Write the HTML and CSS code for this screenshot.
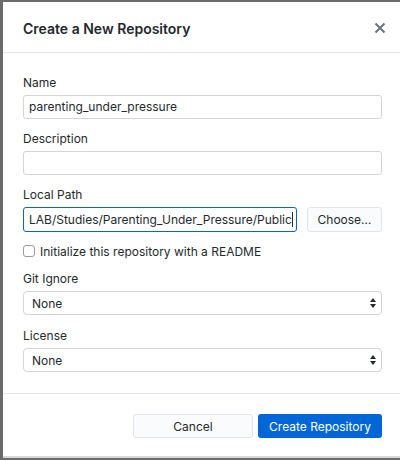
FILE: index.html
```html
<!DOCTYPE html>
<html>
<head>
<meta charset="utf-8">
<link rel="stylesheet" href="styles.css">
</head>
<body>
<div class="dialog">
  <header class="header">
    <h1 class="title">Create a New Repository</h1>
    <svg class="close" width="12" height="12" viewBox="0 0 12 12"><path d="M1.5 1.5 L10.5 10.5 M10.5 1.5 L1.5 10.5" stroke="#6a737d" stroke-width="2" stroke-linecap="butt"/></svg>
  </header>
  <div class="body">
    <div class="group">
      <label class="label">Name</label>
      <div class="input">parenting_under_pressure</div>
    </div>
    <div class="group">
      <label class="label">Description</label>
      <div class="input"></div>
    </div>
    <div class="group">
      <label class="label">Local Path</label>
      <div class="path-row">
        <div class="input focus"><span class="caret">LAB/Studies/Parenting_Under_Pressure/Public</span></div>
        <div class="btn choose">Choose…</div>
      </div>
    </div>
    <div class="check-row">
      <span class="checkbox"></span>
      <span class="check-label">Initialize this repository with a README</span>
    </div>
    <div class="group">
      <label class="label">Git Ignore</label>
      <div class="select"><span>None</span>
        <svg width="8" height="12" viewBox="0 0 8 12"><path d="M4 1 L7 5 L1 5 Z M4 11 L7 7 L1 7 Z" fill="#24292e"/></svg>
      </div>
    </div>
    <div class="group last">
      <label class="label">License</label>
      <div class="select"><span>None</span>
        <svg width="8" height="12" viewBox="0 0 8 12"><path d="M4 1 L7 5 L1 5 Z M4 11 L7 7 L1 7 Z" fill="#24292e"/></svg>
      </div>
    </div>
  </div>
  <footer class="footer">
    <div class="btn cancel">Cancel</div>
    <div class="btn primary">Create Repository</div>
  </footer>
</div>
</body>
</html>
```
FILE: styles.css
```css
* { box-sizing: border-box; }
html, body { margin: 0; padding: 0; }
body {
  width: 400px;
  height: 460px;
  overflow: hidden;
  background: #6b6b6b;
  font-family: Inter, "Liberation Sans", Arial, sans-serif;
  color: #24292e;
  padding: 2px 0 0 3px;
}
.dialog {
  background: #fff;
  height: 456px;
  width: 398px;
  display: flex;
  flex-direction: column;
  border-bottom: 2px solid #d6d6d6;
}
.header {
  height: 51px;
  border-bottom: 1px solid #e1e4e8;
  display: flex;
  align-items: center;
  justify-content: space-between;
  padding: 2px 15px 0 20px;
}
.title {
  margin: 0;
  font-size: 14px;
  font-weight: 600;
  color: #24292e;
}
.close { display: block; }
.body {
  padding: 22px 19px 0 20px;
  height: 341px;
  border-bottom: 1px solid #e1e4e8;
}
.group { margin-bottom: 12px; }
.group.last { margin-top: 13px; }
.label {
  display: block;
  font-size: 12px;
  line-height: 15px;
  margin-bottom: 5px;
}
.input {
  height: 24px;
  border: 1px solid #d1d5da;
  border-radius: 3px;
  font-size: 12px;
  line-height: 22px;
  padding: 0 5px;
  white-space: nowrap;
  overflow: hidden;
}
.input.focus {
  border-color: #0366d6;
  flex: 1;
  height: 25px;
  line-height: 23px;
}
.caret { border-right: 1px solid #24292e; padding-right: 0; }
.path-row {
  display: flex;
  gap: 10px;
}
.btn {
  height: 25px;
  border-radius: 3px;
  font-size: 12px;
  display: flex;
  align-items: center;
  justify-content: center;
}
.choose {
  width: 75px;
  background: #fafbfc;
  border: 1px solid #e1e4e8;
}
.check-row {
  display: flex;
  align-items: center;
  gap: 5px;
  margin: 0 0 13px;
  height: 14px;
  font-size: 12px;
}
.checkbox {
  width: 12px;
  height: 12px;
  border: 1px solid #9a9a9a;
  border-radius: 3px;
  background: #fff;
}
.select {
  height: 24px;
  border: 1px solid #d1d5da;
  border-radius: 4px;
  font-size: 12px;
  display: flex;
  align-items: center;
  justify-content: space-between;
  padding: 0 4px 0 8px;
}
.select svg { display: block; }
.footer {
  flex: 1;
  display: flex;
  justify-content: flex-end;
  gap: 5px;
  padding: 20px 19px 0 0;
}
.cancel {
  width: 120px;
  background: #fafbfc;
  border: 1px solid #e1e4e8;
  height: 24px;
}
.primary {
  width: 124px;
  background: #0366d6;
  color: #fff;
  height: 24px;
}
```
